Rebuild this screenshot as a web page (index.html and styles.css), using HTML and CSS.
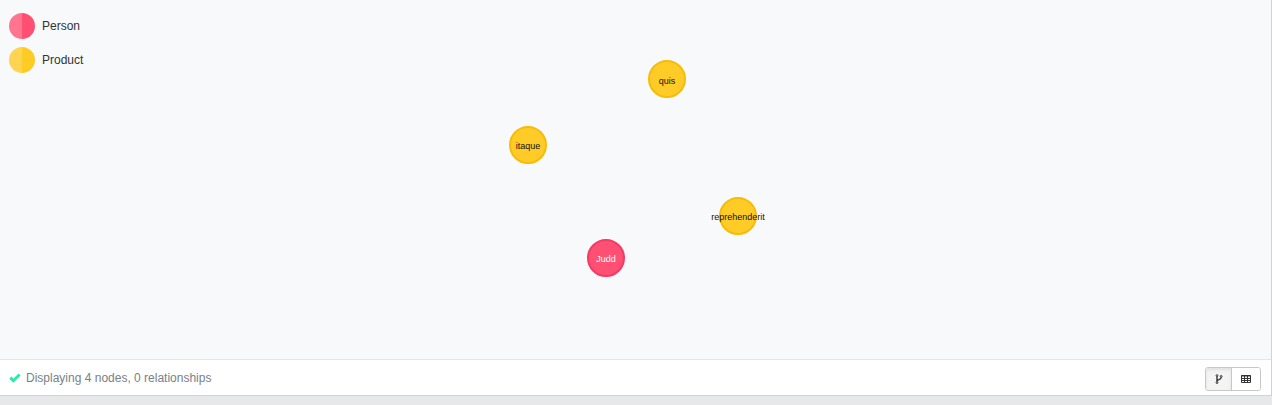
FILE: index.html
```html
<!DOCTYPE html>
<html lang="en">
<head>
<meta charset="utf-8">
<title>Graph result</title>
<link rel="stylesheet" href="styles.css">
</head>
<body>
<main class="frame">
  <section class="graph">
    <ul class="legend">
      <li class="legend-item"><span class="swatch swatch-person"></span>Person</li>
      <li class="legend-item"><span class="swatch swatch-product"></span>Product</li>
    </ul>
    <svg class="canvas" viewBox="0 0 1271 359" role="img" aria-label="Graph with four nodes">
      <g class="node product" transform="translate(667 79)"><circle r="18"/><text y="5">quis</text></g>
      <g class="node product" transform="translate(528 145)"><circle r="18"/><text y="4">itaque</text></g>
      <g class="node product" transform="translate(738 216)"><circle r="18"/><text y="4">reprehenderit</text></g>
      <g class="node person" transform="translate(606 258)"><circle r="18"/><text y="4">Judd</text></g>
    </svg>
  </section>
  <footer class="status">
    <p class="message">
      <svg class="check" viewBox="0 0 12 10" aria-hidden="true"><path d="M1.3 4.7 4.4 7.7 10.6 1.5"/></svg>
      Displaying 4 nodes, 0 relationships
    </p>
    <div class="views">
      <button class="view active" type="button" aria-label="Graph view">
        <svg class="icon" viewBox="0 0 12 12" aria-hidden="true"><g fill="none" stroke="currentColor"><circle cx="4" cy="2.6" r="0.9"/><circle cx="4" cy="9.6" r="0.9"/><circle cx="8.2" cy="3.4" r="0.9"/><path stroke-width="1.4" d="M4 3.5V8.8M8.2 4.3C8.2 7.2 4.4 5.9 4 8.2"/></g></svg>
      </button>
      <button class="view" type="button" aria-label="Table view">
        <svg class="icon" viewBox="0 0 12 12" aria-hidden="true"><path fill="none" stroke="currentColor" d="M1.5 2.5h9v7h-9zM1 3h10M1.5 5.5h9M1.5 7.5h9M4.5 3v7M7.5 3v7"/></svg>
      </button>
    </div>
  </footer>
</main>
</body>
</html>
```
FILE: styles.css
```css
* { box-sizing: border-box; }

body {
  margin: 0;
  min-height: 100vh;
  display: flex;
  flex-direction: column;
  padding-bottom: 9px;
  background: #e7e8ea;
  color: #333;
  font: 12px/16px "Liberation Sans", Arial, sans-serif;
}

.frame {
  flex: 1;
  display: flex;
  flex-direction: column;
  background: #fff;
  border: solid #d2d3d6;
  border-width: 0 1px 1px 0;
}

.graph {
  flex: 1;
  display: grid;
  background: #f8f9fb;
}

.legend,
.canvas { grid-area: 1 / 1; }

.legend {
  display: flex;
  flex-direction: column;
  gap: 8px;
  margin: 0;
  padding: 13px 9px;
  list-style: none;
}

.legend-item {
  display: flex;
  align-items: center;
  gap: 7px;
}

.swatch {
  width: 26px;
  height: 26px;
  border-radius: 50%;
}

.swatch-person { background: linear-gradient(90deg, #ff758f 50%, #ff4f73 50%); }
.swatch-product { background: linear-gradient(90deg, #ffd452 50%, #ffcb25 50%); }

.canvas {
  width: 100%;
  height: 100%;
}

.node circle { stroke-width: 2px; }
.node text {
  font-size: 9px;
  text-anchor: middle;
}

.product circle { fill: #ffcc27; stroke: #f8bb08; }
.product text { fill: #111; }
.person circle { fill: #ff4f73; stroke: #f43b63; }
.person text { fill: #fff; }

.status {
  display: flex;
  align-items: center;
  justify-content: space-between;
  padding: 7px 10px 4px 9px;
  border-top: 1px solid #e4e6e9;
}

.message {
  display: flex;
  align-items: center;
  gap: 5px;
  margin: 0;
  padding-bottom: 2px;
  color: #788185;
}

.check {
  width: 12px;
  height: 10px;
  fill: none;
  stroke: #23eda9;
  stroke-width: 3px;
}

.views {
  display: flex;
  border: 1px solid #c8c8c8;
  border-radius: 3px;
  overflow: hidden;
}

.view {
  display: flex;
  align-items: center;
  justify-content: center;
  width: 29px;
  height: 22px;
  padding: 0;
  border: 0;
  background: #fff;
  color: #333;
}

.view.active {
  width: 25px;
  background: #f4f4f4;
  box-shadow: inset 0 2px 3px #e0e0e0;
}

.view + .view { border-left: 1px solid #c8c8c8; }

.icon {
  width: 12px;
  height: 12px;
}
```
